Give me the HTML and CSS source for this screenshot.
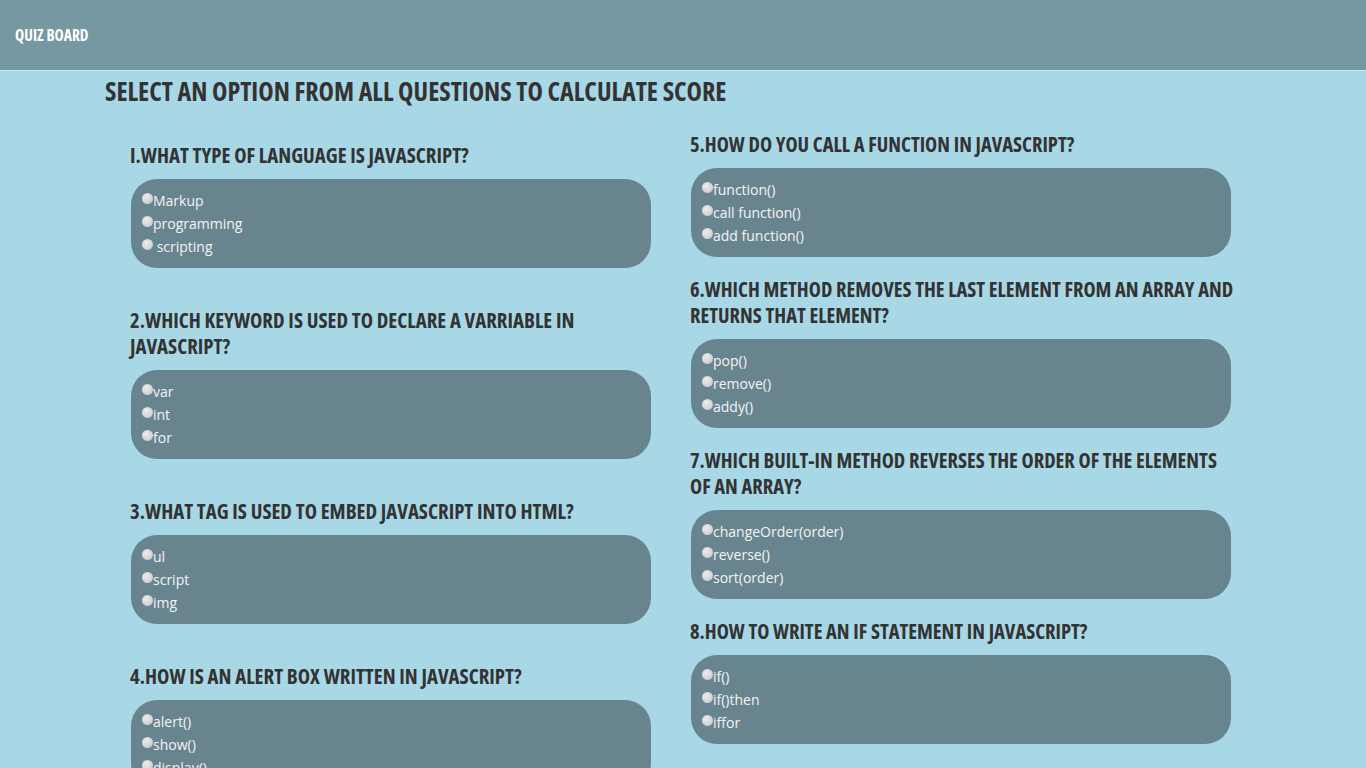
FILE: index.html
```html
<!DOCTYPE html>
<html lang="en">
<head>
<meta charset="utf-8">
<title>Quiz Board</title>
<link rel="stylesheet" href="styles.css">
</head>
<body>
<header class="topbar">
  <span class="brand">QUIZ BOARD</span>
</header>
<main class="page">
  <h1 class="page-title">SELECT AN OPTION FROM ALL QUESTIONS TO CALCULATE SCORE</h1>
  <div class="columns">
    <div class="col col-left">
      <section class="question">
        <h2 class="q-title">I.WHAT TYPE OF LANGUAGE IS JAVASCRIPT?</h2>
        <div class="options">
          <label class="opt"><input type="radio" name="q1">Markup</label>
          <label class="opt"><input type="radio" name="q1">programming</label>
          <label class="opt"><input type="radio" name="q1"> scripting</label>
        </div>
      </section>
      <section class="question">
        <h2 class="q-title">2.WHICH KEYWORD IS USED TO DECLARE A VARRIABLE IN JAVASCRIPT?</h2>
        <div class="options">
          <label class="opt"><input type="radio" name="q2">var</label>
          <label class="opt"><input type="radio" name="q2">int</label>
          <label class="opt"><input type="radio" name="q2">for</label>
        </div>
      </section>
      <section class="question">
        <h2 class="q-title">3.WHAT TAG IS USED TO EMBED JAVASCRIPT INTO HTML?</h2>
        <div class="options">
          <label class="opt"><input type="radio" name="q3">ul</label>
          <label class="opt"><input type="radio" name="q3">script</label>
          <label class="opt"><input type="radio" name="q3">img</label>
        </div>
      </section>
      <section class="question">
        <h2 class="q-title">4.HOW IS AN ALERT BOX WRITTEN IN JAVASCRIPT?</h2>
        <div class="options">
          <label class="opt"><input type="radio" name="q4">alert()</label>
          <label class="opt"><input type="radio" name="q4">show()</label>
          <label class="opt"><input type="radio" name="q4">display()</label>
        </div>
      </section>
    </div>
    <div class="col col-right">
      <section class="question">
        <h2 class="q-title">5.HOW DO YOU CALL A FUNCTION IN JAVASCRIPT?</h2>
        <div class="options">
          <label class="opt"><input type="radio" name="q5">function()</label>
          <label class="opt"><input type="radio" name="q5">call function()</label>
          <label class="opt"><input type="radio" name="q5">add function()</label>
        </div>
      </section>
      <section class="question">
        <h2 class="q-title">6.WHICH METHOD REMOVES THE LAST ELEMENT FROM AN ARRAY AND RETURNS THAT ELEMENT?</h2>
        <div class="options">
          <label class="opt"><input type="radio" name="q6">pop()</label>
          <label class="opt"><input type="radio" name="q6">remove()</label>
          <label class="opt"><input type="radio" name="q6">addy()</label>
        </div>
      </section>
      <section class="question">
        <h2 class="q-title">7.WHICH BUILT-IN METHOD REVERSES THE ORDER OF THE ELEMENTS OF AN ARRAY?</h2>
        <div class="options">
          <label class="opt"><input type="radio" name="q7">changeOrder(order)</label>
          <label class="opt"><input type="radio" name="q7">reverse()</label>
          <label class="opt"><input type="radio" name="q7">sort(order)</label>
        </div>
      </section>
      <section class="question">
        <h2 class="q-title">8.HOW TO WRITE AN IF STATEMENT IN JAVASCRIPT?</h2>
        <div class="options">
          <label class="opt"><input type="radio" name="q8">if()</label>
          <label class="opt"><input type="radio" name="q8">if()then</label>
          <label class="opt"><input type="radio" name="q8">iffor</label>
        </div>
      </section>
    </div>
  </div>
</main>
</body>
</html>
```
FILE: styles.css
```css
html, body {
  margin: 0;
  padding: 0;
}

body {
  background: #a8d8e6;
  font-family: "Open Sans", "DejaVu Sans", sans-serif;
  color: #333;
}

.topbar {
  height: 70px;
  background: #7698a2;
  border-bottom: 1px solid #d3e8ee;
  display: flex;
  align-items: center;
  padding-left: 15px;
}

.brand,
.page-title,
.q-title {
  font-family: "Open Sans", "Roboto Condensed", sans-serif;
  font-stretch: 75%;
  font-weight: 700;
}

.brand {
  font-size: 15.5px;
  color: #fff;
}

.page {
  padding: 5px 0 146px 105px;
}

.page-title {
  margin: 0;
  font-size: 26px;
  line-height: 30px;
  color: #333;
}

.columns {
  display: grid;
  grid-template-columns: 546px 541px;
  column-gap: 39px;
  align-items: start;
  margin-top: 25px;
}

.col-left {
  padding-left: 25px;
  padding-top: 11px;
}

.question {
  margin-bottom: 19px;
}

.col-left .question {
  margin-bottom: 39px;
}

.q-title {
  margin: 0 0 11px;
  font-size: 20.8px;
  line-height: 26px;
  color: #333;
}

.col-right .q-title {
  font-size: 20.5px;
  width: 547px;
}

.options {
  background: #68858f;
  border-radius: 26px;
  padding: 10px 11px;
  width: 498px;
  margin-left: 1px;
}

.col-right .options {
  width: 518px;
}

.opt {
  display: block;
  line-height: 23px;
  font-size: 14px;
  color: #f4f4f4;
  white-space: pre;
}

.opt input {
  -webkit-appearance: none;
  appearance: none;
  width: 11px;
  height: 11px;
  margin: 0;
  border: none;
  border-radius: 50%;
  background: radial-gradient(circle at 40% 35%, #ececec 0%, #d6d6d6 55%, #bdbdbd 100%);
  vertical-align: 2px;
}
```
